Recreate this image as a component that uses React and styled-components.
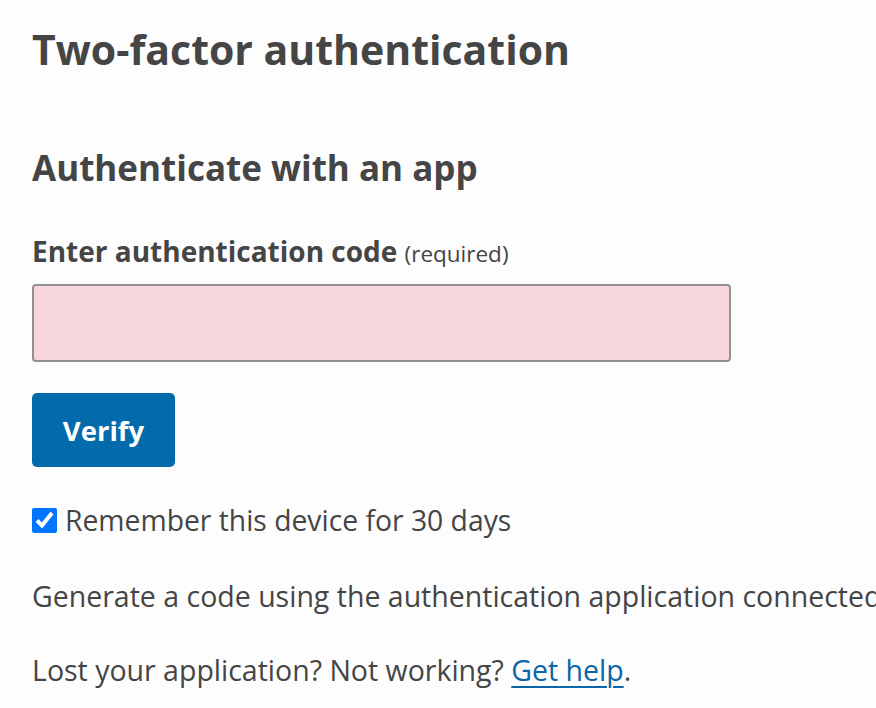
import React from "react";
import styled, { createGlobalStyle } from "styled-components";

const Global = createGlobalStyle`
  html, body { margin: 0; padding: 0; background: #fdfdfd; }
  body { font-family: "Open Sans", Lato, sans-serif; color: #454545; }
`;

const Page = styled.main`
  display: flex;
  flex-direction: column;
  align-items: flex-start;
  padding: 19px 0 0 32px;
  width: 876px;
  box-sizing: border-box;
  overflow: hidden;
`;

const Title = styled.h1`
  margin: 0;
  font-size: 41px;
  line-height: 60px;
  font-weight: 700;
  white-space: nowrap;
`;

const Subtitle = styled.h2`
  margin: 65px 0 0;
  font-size: 35px;
  line-height: 48px;
  font-weight: 700;
`;

const Form = styled.form`
  display: flex;
  flex-direction: column;
  align-items: flex-start;
  margin-top: 42px;
`;

const Label = styled.label`
  font-size: 28px;
  line-height: 34px;
  font-weight: 700;
  white-space: nowrap;
`;

const Hint = styled.span`
  font-size: 22.5px;
  font-weight: 400;
`;

const CodeInput = styled.input`
  margin-top: 13px;
  width: 699px;
  height: 78px;
  box-sizing: border-box;
  border: 2px solid #919191;
  border-radius: 4px;
  background: #f7d7dc;
  font: inherit;
  font-size: 28px;
  padding: 0 12px;
  outline: none;
`;

const Button = styled.button`
  margin-top: 31px;
  width: 143px;
  height: 74px;
  border: none;
  border-radius: 5px;
  background: #036aab;
  color: #fff;
  font-family: inherit;
  font-size: 27.5px;
  font-weight: 700;
  cursor: pointer;
`;

const CheckRow = styled.label`
  margin-top: 37px;
  display: flex;
  align-items: center;
  gap: 8px;
  font-size: 28.3px;
  line-height: 32px;
  white-space: nowrap;
`;

const Check = styled.input`
  margin: 0;
  width: 25px;
  height: 25px;
  accent-color: #0075ff;
`;

const Text = styled.p`
  margin: ${(p) => p.$gap}px 0 0;
  font-size: 28.5px;
  line-height: 36px;
  white-space: nowrap;
`;

const Link = styled.a`
  color: #0a66a8;
  text-decoration: underline;
  text-underline-offset: 5px;
  text-decoration-thickness: 2px;
`;

export default function App() {
  return (
    <>
      <Global />
      <Page>
        <Title>Two-factor authentication</Title>
        <Subtitle>Authenticate with an app</Subtitle>
        <Form onSubmit={(e) => e.preventDefault()}>
          <Label htmlFor="code">
            Enter authentication code <Hint>(required)</Hint>
          </Label>
          <CodeInput id="code" type="text" />
          <Button type="submit">Verify</Button>
          <CheckRow>
            <Check type="checkbox" defaultChecked />
            Remember this device for 30 days
          </CheckRow>
        </Form>
        <Text $gap={42}>
          Generate a code using the authentication application connected to your account.
        </Text>
        <Text $gap={38}>
          Lost your application? Not working? <Link href="#">Get help</Link>.
        </Text>
      </Page>
    </>
  );
}
